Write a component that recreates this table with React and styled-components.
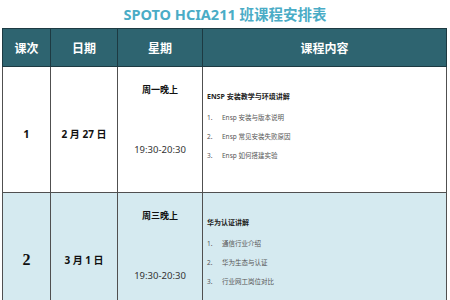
import styled, { createGlobalStyle } from 'styled-components';

const GlobalStyle = createGlobalStyle`
  body {
    margin: 0;
    background: #fff;
    font-family: 'Noto Sans', 'Noto Sans CJK SC', sans-serif;
  }
`;

const lessons = [
  {
    no: '1',
    date: '2 月 27 日',
    day: '周一晚上',
    time: '19:30-20:30',
    title: 'ENSP 安装教学与环境讲解',
    items: ['Ensp 安装与版本说明', 'Ensp 常见安装失败原因', ' Ensp 如何搭建实验'],
    tint: false,
  },
  {
    no: '2',
    date: '3 月 1 日',
    day: '周三晚上',
    time: '19:30-20:30',
    title: '华为认证讲解',
    items: ['通信行业介绍', '华为生态与认证', '行业网工岗位对比'],
    tint: true,
    serifNo: true,
  },
];

const App = () => {
  return (
    <>
      <GlobalStyle />
      <Page>
        <Title>SPOTO HCIA211 班课程安排表</Title>
        <Table>
          <colgroup>
            <col style={{ width: 48 }} />
            <col style={{ width: 67 }} />
            <col style={{ width: 85 }} />
            <col />
          </colgroup>
          <thead>
            <tr>
              <HeadCell>课次</HeadCell>
              <HeadCell>日期</HeadCell>
              <HeadCell>星期</HeadCell>
              <HeadCell>课程内容</HeadCell>
            </tr>
          </thead>
          <tbody>
            {lessons.map((l) => (
              <Row key={l.no} $tint={l.tint}>
                <NoCell $serif={l.serifNo}>{l.no}</NoCell>
                <DateCell>{l.date}</DateCell>
                <Cell>
                  <DayBox>
                    <DayName>{l.day}</DayName>
                    <Time>{l.time}</Time>
                  </DayBox>
                </Cell>
                <Cell>
                  <Content>
                    <Heading>{l.title}</Heading>
                    <List>
                      {l.items.map((it, i) => (
                        <Item key={i}>
                          <Num>{i + 1}.</Num>
                          <span>{it}</span>
                        </Item>
                      ))}
                    </List>
                  </Content>
                </Cell>
              </Row>
            ))}
          </tbody>
        </Table>
      </Page>
    </>
  );
};

const Page = styled.div`
  width: 450px;
  height: 300px;
  overflow: hidden;
`;

const Title = styled.div`
  height: 28px;
  line-height: 28px;
  text-align: center;
  font-size: 14.5px;
  font-weight: 700;
  color: #4aacc6;
`;

const Table = styled.table`
  margin-left: 2px;
  width: 445px;
  border-collapse: collapse;
  table-layout: fixed;
  border-left: 1px solid #8a8a8a;
  border-right: 1px solid #8a8a8a;
`;

const HeadCell = styled.th`
  height: 37px;
  padding: 0;
  background: #2e6470;
  color: #fff;
  font-size: 12px;
  font-weight: 700;
  border: 1px solid #1d3a42;
  text-align: center;
`;

const Row = styled.tr`
  background: ${({ $tint }) => ($tint ? '#d5eaf0' : '#fff')};
`;

const Cell = styled.td`
  padding: 0;
  border: 1px solid #505050;
  vertical-align: top;
  height: 125px;
`;

const NoCell = styled(Cell)`
  vertical-align: middle;
  text-align: center;
  padding-top: 8px;
  height: 117px;
  font-family: ${({ $serif }) => ($serif ? "'Liberation Serif', serif" : 'inherit')};
  font-size: ${({ $serif }) => ($serif ? '16px' : '11px')};
  font-weight: 700;
  color: #111;
`;

const DateCell = styled(Cell)`
  vertical-align: middle;
  text-align: center;
  padding-top: 8px;
  height: 117px;
  font-size: 10px;
  font-weight: 700;
  color: #111;
`;

const DayBox = styled.div`
  display: flex;
  flex-direction: column;
  align-items: center;
  padding-top: 16px;
`;

const DayName = styled.div`
  font-size: 9px;
  font-weight: 700;
  color: #111;
  line-height: 14px;
`;

const Time = styled.div`
  margin-top: 46px;
  font-size: 9.5px;
  color: #333;
  line-height: 14px;
`;

const Content = styled.div`
  padding: 25px 0 0 4px;
`;

const Heading = styled.div`
  font-size: 7px;
  font-weight: 700;
  color: #222;
  line-height: 10px;
`;

const List = styled.div`
  display: flex;
  flex-direction: column;
  gap: 9px;
  margin-top: 11px;
`;

const Item = styled.div`
  display: flex;
  font-size: 6.5px;
  color: #555;
  line-height: 10px;
`;

const Num = styled.span`
  width: 15px;
  flex: none;
`;

export default App;
